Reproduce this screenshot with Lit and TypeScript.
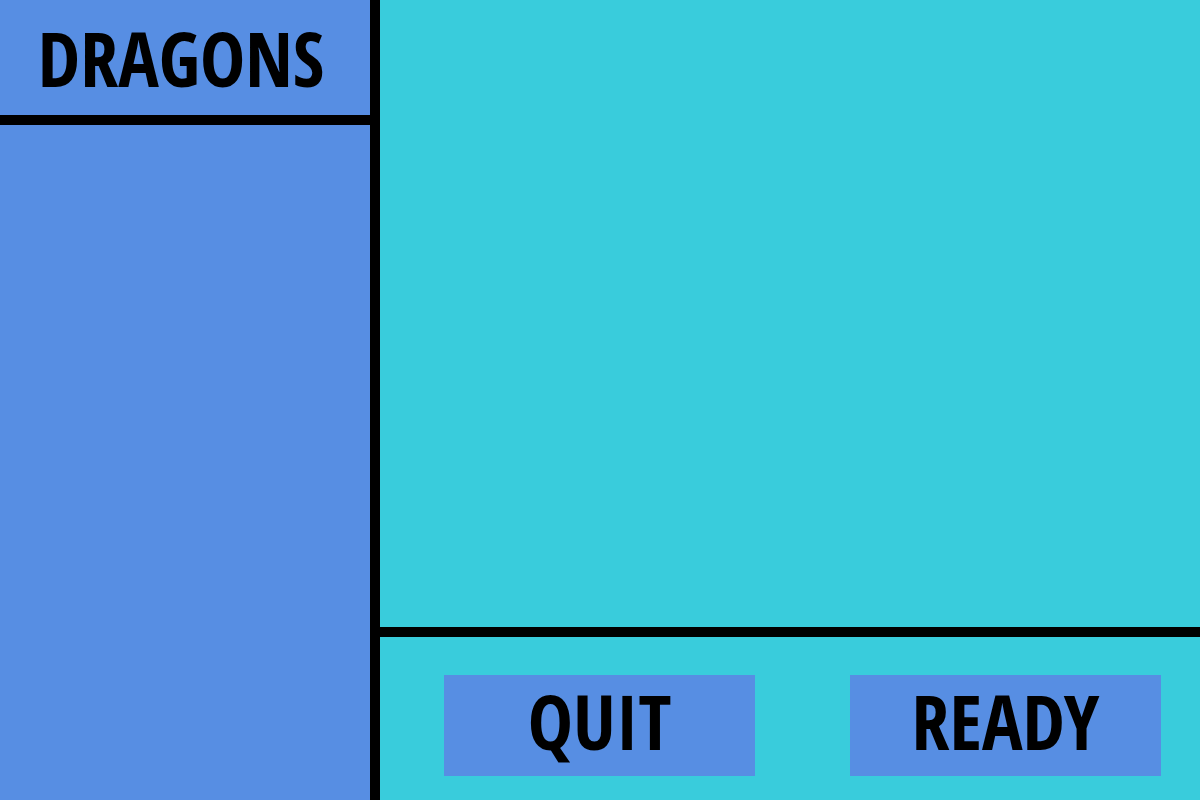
import { LitElement, html, css } from "lit";
import { customElement } from "lit/decorators.js";

@customElement("app-root")
export class AppRoot extends LitElement {
  static styles = css`
    :host {
      display: grid;
      grid-template-columns: 370px 1fr;
      column-gap: 10px;
      min-height: 100vh;
      background: #000;
      color: #000;
      font-family: "Marker Felt", "Noto Sans ExtraCondensed", "Open Sans Condensed", "Roboto Condensed", "Liberation Sans Narrow", sans-serif;
      font-weight: 700;
    }
    .sidebar,
    .main {
      display: flex;
      flex-direction: column;
      gap: 10px;
    }
    .heading {
      display: flex;
      align-items: center;
      justify-content: center;
      box-sizing: border-box;
      height: 115px;
      padding-right: 8px;
      background: #578ee3;
    }
    .title {
      margin: 0;
      font-size: 76px;
      line-height: 80px;
      font-weight: inherit;
    }
    .players {
      flex: 1;
      background: #578ee3;
    }
    .board {
      flex: 1;
      background: #39ccdc;
    }
    .actions {
      display: grid;
      grid-template-columns: 1fr 1fr;
      column-gap: 95px;
      padding: 38px 39px 24px 64px;
      background: #39ccdc;
    }
    .action {
      height: 101px;
      padding: 0 0 10px;
      border: 0;
      background: #578ee3;
      color: inherit;
      font: inherit;
      font-size: 76px;
      line-height: 80px;
      cursor: pointer;
    }
  `;

  render() {
    return html`
      <aside class="sidebar">
        <header class="heading"><h1 class="title">DRAGONS</h1></header>
        <div class="players"></div>
      </aside>
      <main class="main">
        <div class="board"></div>
        <div class="actions">
          <button class="action" type="button">QUIT</button>
          <button class="action" type="button">READY</button>
        </div>
      </main>
    `;
  }
}
